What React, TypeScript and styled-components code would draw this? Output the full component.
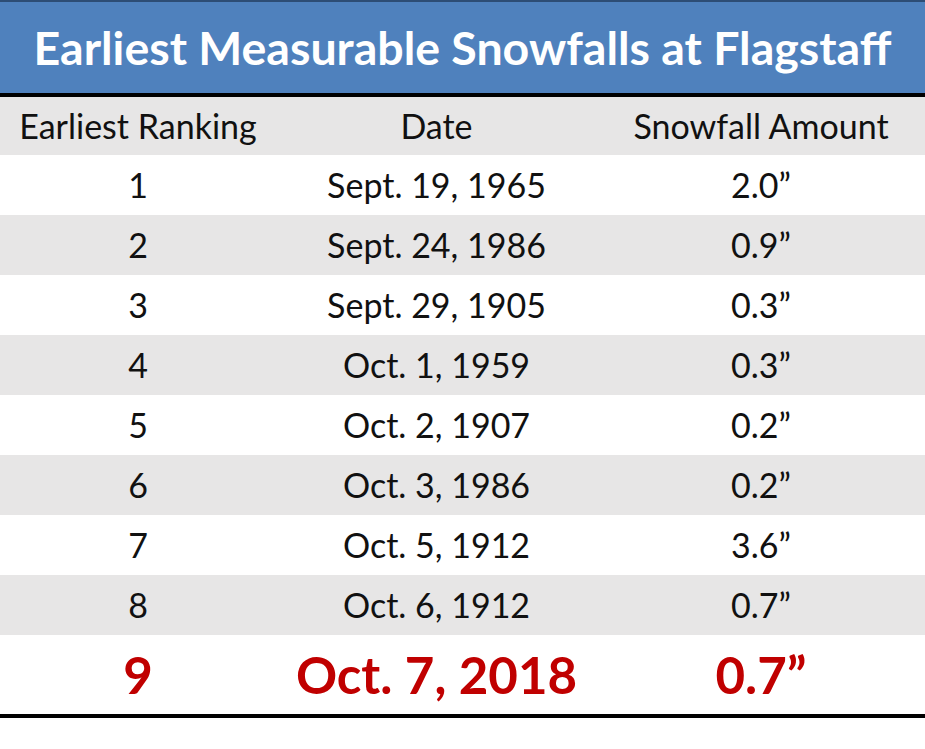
import React from "react";
import styled, { createGlobalStyle } from "styled-components";

const Global = createGlobalStyle`
  html, body { margin: 0; padding: 0; background: #ffffff; }
  body { font-family: "Lato", "Open Sans", sans-serif; }
`;

const Table = styled.div`
  width: 925px;
  display: flex;
  flex-direction: column;
  border-bottom: 4px solid #000;
  box-shadow: 0 1px 0 #c8c8c8;
`;

const TitleBar = styled.div`
  height: 91px;
  border-top: 2px solid #2d4d75;
  background: #4f81bd;
  border-bottom: 4px solid #000;
  display: flex;
  align-items: center;
  justify-content: center;
  color: #fff;
  font-weight: 700;
  font-size: 46.5px;
  line-height: 1;
`;

const Row = styled.div<{ $shade?: boolean; $height?: number }>`
  display: grid;
  grid-template-columns: 276px 321px 328px;
  height: ${(p) => p.$height ?? 60}px;
  background: ${(p) => (p.$shade ? "#e7e6e6" : "#ffffff")};
  align-items: center;
`;

const Cell = styled.div<{ $highlight?: boolean }>`
  text-align: center;
  color: ${(p) => (p.$highlight ? "#c00000" : "#111")};
  font-size: ${(p) => (p.$highlight ? 51 : 34)}px;
  font-weight: ${(p) => (p.$highlight ? 700 : 400)};
  line-height: 1;
`;

const rows: [string, string, string][] = [
  ["1", "Sept. 19, 1965", "2.0\u201D"],
  ["2", "Sept. 24, 1986", "0.9\u201D"],
  ["3", "Sept. 29, 1905", "0.3\u201D"],
  ["4", "Oct. 1, 1959", "0.3\u201D"],
  ["5", "Oct. 2, 1907", "0.2\u201D"],
  ["6", "Oct. 3, 1986", "0.2\u201D"],
  ["7", "Oct. 5, 1912", "3.6\u201D"],
  ["8", "Oct. 6, 1912", "0.7\u201D"],
];

const last: [string, string, string] = ["9", "Oct. 7, 2018", "0.7\u201D"];

export default function App() {
  return (
    <>
      <Global />
      <Table>
        <TitleBar>Earliest Measurable Snowfalls at Flagstaff</TitleBar>
        <Row $shade $height={58}>
          <Cell>Earliest Ranking</Cell>
          <Cell>Date</Cell>
          <Cell>Snowfall Amount</Cell>
        </Row>
        {rows.map((r, i) => (
          <Row key={r[0]} $shade={i % 2 === 1}>
            <Cell>{r[0]}</Cell>
            <Cell>{r[1]}</Cell>
            <Cell>{r[2]}</Cell>
          </Row>
        ))}
        <Row $height={79}>
          <Cell $highlight>{last[0]}</Cell>
          <Cell $highlight>{last[1]}</Cell>
          <Cell $highlight>{last[2]}</Cell>
        </Row>
      </Table>
    </>
  );
}
